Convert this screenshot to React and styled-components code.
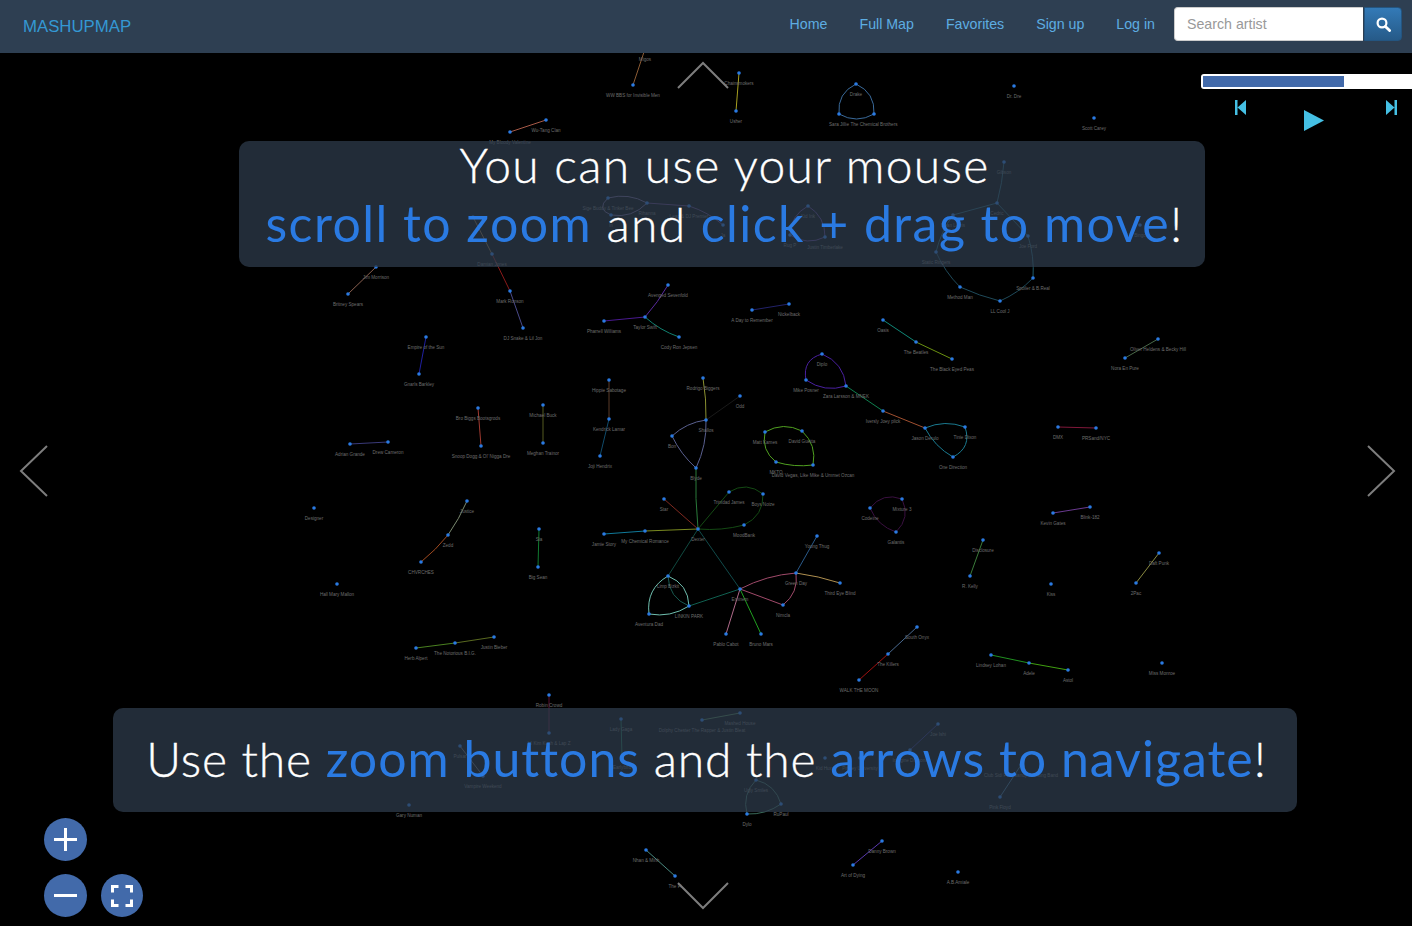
import React from 'react'
import styled, { createGlobalStyle } from 'styled-components'

const Global = createGlobalStyle`
  html, body {
    margin: 0;
    height: 100%;
    background: #000;
    overflow: hidden;
  }
  * { box-sizing: border-box; }
`

const Page = styled.div`
  width: 1412px;
  height: 926px;
  display: flex;
  flex-direction: column;
  font-family: "Liberation Sans", Arial, sans-serif;
`

const Navbar = styled.nav`
  height: 53px;
  flex: none;
  display: flex;
  align-items: center;
  padding: 0 10px 0 23px;
  background: #2e3f52;
`

const Brand = styled.a`
  font-size: 16.8px;
  color: #3498d4;
  margin-right: auto;
  position: relative;
  top: 0;
`

const NavLinks = styled.div`
  display: flex;
  gap: 32px;
  margin-right: 19px;
  position: relative;
  top: -3px;
`

const NavLink = styled.a`
  font-size: 14.2px;
  line-height: 20px;
  color: #5dade2;
`

const SearchForm = styled.form`
  display: flex;
  height: 34px;
  margin: 0;
  position: relative;
  top: -2.5px;
`

const SearchInput = styled.input`
  width: 189px;
  height: 34px;
  padding: 6px 12px;
  border: 1px solid #ccc;
  border-right: 0;
  border-radius: 4px 0 0 4px;
  background: #fff;
  font: 14.2px "Liberation Sans", Arial, sans-serif;
  &::placeholder { color: #999; opacity: 1; }
`

const SearchButton = styled.button`
  width: 38px;
  height: 34px;
  margin-left: 1px;
  padding: 0;
  display: flex;
  align-items: center;
  justify-content: center;
  border: 1px solid #245580;
  border-radius: 0 4px 4px 0;
  background: linear-gradient(to bottom, #337ab7, #265a88);
`

const Main = styled.main`
  position: relative;
  flex: 1;
  overflow: hidden;
  background: #000;
`

const MapCanvas = styled.svg`
  position: absolute;
  inset: 0;
  width: 1412px;
  height: 873px;
`

const NodeLabel = styled.text`
  font-family: "Liberation Sans", Arial, sans-serif;
  font-size: 4.6px;
  fill: #6e6e6e;
  text-anchor: middle;
`

const Arrow = styled.svg`
  position: absolute;
  width: ${p => p.$w}px;
  height: ${p => p.$h}px;
  left: ${p => p.$left}px;
  top: ${p => p.$top}px;
  fill: none;
  stroke: #7d7d7d;
  stroke-width: 2;
`

const Panel = styled.div`
  position: absolute;
  display: flow-root;
  left: ${p => p.$left}px;
  top: ${p => p.$top}px;
  width: ${p => p.$width}px;
  height: ${p => p.$height}px;
  padding-left: ${p => p.$indent}px;
  border-radius: 10px;
  background: rgba(46, 60, 77, 0.73);
  color: #fff;
  font-family: Lato, sans-serif;
  font-size: 48px;
  font-weight: 300;
  -webkit-text-stroke: 0.35px #fff;
  line-height: 58px;
  letter-spacing: ${p => p.$spacing}px;
  text-align: center;
  white-space: nowrap;
`

const PanelText = styled.div`
  margin-top: ${p => p.$offset}px;
`

const Hot = styled.span`
  color: #2a7ae2;
  font-size: 50px;
  font-weight: 400;
  -webkit-text-stroke: 0;
  letter-spacing: ${p => p.$spacing}px;
`

const Player = styled.div`
  position: absolute;
  top: 21px;
  right: 0;
  width: 211px;
`

const Track = styled.div`
  height: 15px;
  padding: 2px;
  border-radius: 3px 0 0 3px;
  background: #fff;
`

const TrackFill = styled.div`
  height: 11px;
  background: #426aaa;
`

const PlayerControls = styled.div`
  display: flex;
  align-items: flex-start;
  padding: 11px 15px 0 34px;
`

const PlayerIcon = styled.svg`
  flex: none;
  fill: #45c0e4;
  width: ${p => p.$w}px;
  height: ${p => p.$h}px;
  margin: ${p => p.$m || 0};
`

const ZoomControls = styled.div`
  position: absolute;
  left: 44px;
  bottom: 9px;
  display: grid;
  grid-template-columns: 43px 42px;
  grid-template-rows: 43px 43px;
  column-gap: 14px;
  row-gap: 13px;
`

const ZoomButton = styled.button`
  width: 100%;
  height: 43px;
  padding: 0;
  border: 0;
  border-radius: 50%;
  background: #426aaa;
  display: flex;
  align-items: center;
  justify-content: center;
  grid-column: ${p => p.$col || 'auto'};
  grid-row: ${p => p.$row || 'auto'};
`

// x, y, label - page coordinates taken from the picture
const nodes = {
  migos: [645, 49, 'Migos'], wbb: [633, 85, 'WW BBS for Invisible Men'],
  chain: [739, 73, 'Chainsmokers'], usher: [736, 111, 'Usher'],
  drake: [856, 84, 'Drake'], jillie: [839, 114, 'Sara Jillie'], chem: [874, 114, 'The Chemical Brothers'],
  dre: [1014, 86, 'Dr. Dre'], scott: [1094, 118, 'Scott Carey'],
  wutang: [546, 120, 'Wu-Tang Clan'], mbv: [510, 132, 'My Bloody Valentine'],
  sige: [608, 198, 'Sige Buddy & Tinker Bee'], inn: [611, 215, 'In'], rihanna: [647, 203, 'Rihanna'],
  lead: [689, 206, 'Lead & DJ Premier'], ja: [723, 225, 'Ja'],
  damo: [473, 217, ''], damian: [492, 254, 'Damian Jones'], ronson: [510, 291, 'Mark Ronson'],
  snake: [523, 328, 'DJ Snake & Lil Jon'], britney: [348, 294, 'Britney Spears'], morrison: [376, 267, 'Jim Morrison'],
  empire: [426, 337, 'Empire of the Sun'], gnarls: [419, 374, 'Gnarls Barkley'],
  taylor: [645, 317, 'Taylor Swift'], avenged: [668, 285, 'Avenged Sevenfold'],
  pharrell: [604, 321, 'Pharrell Williams'], cody: [679, 337, 'Cody Ron Jepsen'],
  hippie: [609, 380, 'Hippie Sabotage'], kendrick: [609, 419, 'Kendrick Lamar'], joji: [600, 456, 'Joji Hendrix'],
  buck: [543, 405, 'Michael Buck'], meghan: [543, 443, 'Meghan Trainor'],
  biggs: [478, 408, 'Bro Biggs Bootsgrods'], snoop: [481, 446, "Snoop Dogg & Ol' Nigga Dre"],
  adrian: [350, 444, 'Adrian Grande'], drew: [388, 442, 'Drew Cameron'],
  aday: [752, 310, 'A Day to Remember'], nickel: [789, 304, 'Nickelback'],
  oasis: [883, 320, 'Oasis'], beatles: [916, 342, 'The Beatles'], bep: [952, 359, 'The Black Eyed Peas'],
  olly: [1158, 339, 'Oliver Heldens & Becky Hill'], nora: [1125, 358, 'Nora En Pure'],
  diplo: [822, 354, 'Diplo'], posner: [806, 380, 'Mike Posner'], zara: [846, 386, 'Zara Larsson & MNEK'],
  iversly: [883, 411, 'Iversly Joey plick'], derulo: [925, 428, 'Jason Derulo'], tinie: [965, 427, 'Tinie Dixon'],
  direction: [953, 457, 'One Direction'], dmx: [1058, 427, 'DMX'], prisand: [1096, 428, 'PRSand/NYC'],
  kames: [765, 432, 'Matt Kames'], guetta: [802, 431, 'David Guetta'], mkto: [776, 462, 'MKTO'],
  vegas: [813, 465, 'David Vegas, Like Mike & Ummet Ozcan'],
  odd: [740, 396, 'Odd'], rodrigo: [703, 378, 'Rodrigo Biggers'], shallos: [706, 420, 'Shallos'],
  bon: [672, 436, 'Bon'], blyde: [696, 468, 'Blyde'],
  designer: [314, 508, 'Designer'], justice: [467, 501, 'Justice'], zedd: [448, 535, 'Zedd'], chvrches: [421, 562, 'CHVRCHES'],
  sia: [539, 529, 'Sia'], bigsean: [538, 567, 'Big Sean'], hall: [337, 584, 'Hall Mary Mallon'],
  herb: [416, 648, 'Herb Alpert'], biggie: [455, 643, 'The Notorious B.I.G.'], bieber: [494, 637, 'Justin Bieber'],
  robin: [549, 695, 'Robin Crowd'], lilkim: [549, 733, 'Lil Kim Kush & Lap Z'],
  star: [664, 499, 'Star'], dexter: [698, 529, 'Dexter'], mcr: [645, 531, 'My Chemical Romance'], jamie: [604, 534, 'Jamie Story'],
  trinidad: [729, 492, 'Trinidad James'], boys: [763, 494, 'Boys Noize'], moodbank: [744, 525, 'MoodBank'],
  limp: [668, 576, 'Limp Bizkit'], aventura: [649, 614, 'Aventura Dad'], linkin: [689, 606, 'LINKIN PARK'],
  eminem: [740, 589, 'Eminem'], pablo: [726, 634, 'Pablo Cabot'], bruno: [761, 634, 'Bruno Mars'],
  greenday: [796, 573, 'Green Day'], thug: [817, 536, 'Young Thug'], thirdeye: [840, 583, 'Third Eye Blind'], nimcla: [783, 605, 'Nimcla'],
  codeine: [870, 508, 'Codeine'], mixture: [902, 499, 'Mixture 3'], galantis: [896, 532, 'Galantis'],
  gates: [1053, 513, 'Kevin Gates'], blink: [1090, 507, 'Blink-182'], disclosure: [983, 540, 'Disclosure'], kelly: [970, 576, 'R. Kelly'],
  kiss: [1051, 584, 'Kiss'], daft: [1159, 553, 'Daft Punk'], tupac: [1136, 583, '2Pac'],
  south: [917, 627, 'South Onyx'], killers: [888, 654, 'The Killers'], walk: [859, 680, 'WALK THE MOON'],
  lohan: [991, 655, 'Lindsey Lohan'], adele: [1029, 663, 'Adele'], astol: [1068, 670, 'Astol'], monroe: [1162, 663, 'Miss Monroe'],
  numan: [409, 805, 'Gary Numan'], pulsar: [460, 746, 'Pulsar'], vampire: [483, 776, 'Vampire Weekend'],
  gaga: [621, 719, 'Lady Gaga'], early: [622, 757, 'Earlybird'], dolphy: [702, 720, 'Dolphy Chester The Rapper & Justin Bleat'], mashed: [740, 713, 'Mashed House'],
  ishi: [938, 724, 'Joe Ishi'], dragons: [910, 750, 'Imagine Dragons'], kidh: [825, 758, 'Kid Huxx'], florida: [860, 758, 'Pinney University'],
  smiles: [756, 780, 'Ugly Smiles'], rupaul: [781, 804, 'RuPaul'], dylo: [747, 814, 'Dylo'],
  nhan: [646, 850, 'Nhan & Minh'], fi: [675, 876, 'The Fi'], danny: [882, 841, 'Danny Brown'], dying: [853, 865, 'Art of Dying'], amiable: [958, 872, 'A.B.Amiale'],
  club: [1021, 765, 'Club Sidi Feat Sandy Wanking Band'], floyd: [1000, 797, 'Pink Floyd'],
  gibson: [1004, 162, 'Gibson'], cedric: [997, 203, 'Cedric'], dean: [953, 215, 'Dean Lewis'], ford: [1028, 236, 'Joe Ford'],
  ringers: [936, 252, 'Static Ringers'], method: [960, 287, 'Method Man'], llcool: [1000, 301, 'LL Cool J'], spoiler: [1033, 278, 'Spoiler & B.Real'],
  kidink: [808, 206, 'Kid Ink'], timber: [825, 237, 'Justin Timberlake'], rug: [790, 235, 'Rug P'], bingo: [1140, 225, 'Bingo'],
}

// from, to, colour, bend in px (sideways push of the curve's middle)
const links = [
  ['migos', 'wbb', '#8a5a33'], ['chain', 'usher', '#a8a020'], ['drake', 'jillie', '#3a6a9a', 6], ['jillie', 'chem', '#3a6a9a', 5], ['chem', 'drake', '#3a6a9a', 6],
  ['wutang', 'mbv', '#a85a48'], ['sige', 'inn', '#6b5a88', 7], ['inn', 'rihanna', '#6b5a88', 5], ['sige', 'rihanna', '#6b5a88', -4], ['rihanna', 'lead', '#5b3a78'], ['lead', 'ja', '#5b3a78', -2],
  ['damo', 'damian', '#8a6a3a'], ['damian', 'ronson', '#8a1a1a'], ['ronson', 'snake', '#4a4a8a'], ['britney', 'morrison', '#8a6050'],
  ['empire', 'gnarls', '#2020a0'], ['taylor', 'avenged', '#5a2aa0', 1], ['taylor', 'pharrell', '#4a1a90'], ['taylor', 'cody', '#108070', 2],
  ['hippie', 'kendrick', '#5a3a28'], ['kendrick', 'joji', '#104a6a'], ['buck', 'meghan', '#555a20'], ['biggs', 'snoop', '#a03a30'], ['adrian', 'drew', '#3a3a7a'],
  ['aday', 'nickel', '#22226a'], ['oasis', 'beatles', '#108878'], ['beatles', 'bep', '#6a9010'], ['olly', 'nora', '#4a6a4a'],
  ['diplo', 'posner', '#4a20a0', 7], ['posner', 'zara', '#4a20a0', 5], ['zara', 'diplo', '#4a20a0', 6], ['zara', 'iversly', '#108050'], ['iversly', 'derulo', '#a05030'],
  ['derulo', 'tinie', '#1a7a90', -4], ['tinie', 'direction', '#1a7a90', -7], ['direction', 'derulo', '#1a7a90', -3], ['dmx', 'prisand', '#80183a'],
  ['kames', 'guetta', '#50a020', -5], ['guetta', 'vegas', '#50a020', -5], ['vegas', 'mkto', '#50a020', -2], ['mkto', 'kames', '#50a020', -5],
  ['odd', 'shallos', '#1a1a1a'], ['rodrigo', 'shallos', '#8a9030', -1], ['bon', 'shallos', '#5a6090', -3], ['shallos', 'blyde', '#5a6090', -3], ['bon', 'blyde', '#5a6090', 2], ['blyde', 'dexter', '#2a7a3a', 1],
  ['justice', 'zedd', '#7a8a70', -1], ['zedd', 'chvrches', '#a04a20', -1], ['sia', 'bigsean', '#107a30'], ['herb', 'biggie', '#4a8020'], ['biggie', 'bieber', '#5a6a20'],
  ['robin', 'lilkim', '#5a1030'], ['star', 'dexter', '#802a20'], ['dexter', 'trinidad', '#144a14'], ['trinidad', 'boys', '#144a14', -6], ['boys', 'moodbank', '#144a14', -6], ['moodbank', 'dexter', '#144a14', -2],
  ['dexter', 'mcr', '#7a8a20'], ['mcr', 'jamie', '#107a9a'], ['dexter', 'limp', '#104a40'], ['dexter', 'eminem', '#104a4a'], ['linkin', 'eminem', '#106050'],
  ['limp', 'linkin', '#70c0b0', -6], ['limp', 'linkin', '#185a50', 6], ['limp', 'aventura', '#70c0b0', 7], ['aventura', 'linkin', '#70c0b0', 4],
  ['eminem', 'greenday', '#a04a6a', -3], ['eminem', 'nimcla', '#a04a6a'], ['nimcla', 'greenday', '#a04a6a', 5], ['greenday', 'thug', '#2a5a8a'], ['greenday', 'thirdeye', '#b09050', -1],
  ['eminem', 'pablo', '#b06a8a'], ['eminem', 'bruno', '#20a020'],
  ['codeine', 'mixture', '#3a1040', -6], ['mixture', 'galantis', '#3a1040', -6], ['galantis', 'codeine', '#3a1040', -4],
  ['gates', 'blink', '#6a3a90'], ['disclosure', 'kelly', '#3a7a3a'], ['daft', 'tupac', '#8a8a40'], ['south', 'killers', '#4a6a90'], ['killers', 'walk', '#a01010'],
  ['lohan', 'adele', '#209020'], ['adele', 'astol', '#40a010'], ['pulsar', 'vampire', '#6a6a6a'], ['gaga', 'early', '#1a6a4a'], ['dolphy', 'mashed', '#4a7a4a'], ['ishi', 'dragons', '#2a2a7a'],
  ['smiles', 'rupaul', '#3a6a5a', -5], ['rupaul', 'dylo', '#3a6a5a', -3], ['dylo', 'smiles', '#3a6a5a', -5], ['nhan', 'fi', '#4a8a80'], ['danny', 'dying', '#5a3ab0'], ['club', 'floyd', '#3a6a8a'],
  ['gibson', 'cedric', '#1f5a6a', -1], ['dean', 'cedric', '#1f5a6a'], ['cedric', 'ford', '#1f5a6a'], ['ford', 'spoiler', '#1f5a6a', -2], ['dean', 'ringers', '#1f5a6a', 2],
  ['ringers', 'method', '#1f4a5a', 2], ['method', 'llcool', '#1f4a5a', 1], ['llcool', 'spoiler', '#1f4a5a', 2],
  ['kidink', 'rug', '#5a3a88', 5], ['rug', 'timber', '#5a3a88', 5], ['timber', 'kidink', '#5a3a88', 5],
]

const linkPath = ([from, to, , bend = 0]) => {
  const [x1, y1] = nodes[from]
  const [x2, y2] = nodes[to]
  if (!bend) return `M${x1} ${y1}L${x2} ${y2}`
  const len = Math.hypot(x2 - x1, y2 - y1)
  const cx = (x1 + x2) / 2 + ((y1 - y2) / len) * bend * 2
  const cy = (y1 + y2) / 2 + ((x2 - x1) / len) * bend * 2
  return `M${x1} ${y1}Q${cx} ${cy} ${x2} ${y2}`
}

const MashupGraph = () => (
  <MapCanvas viewBox="0 53 1412 873">
    {links.map((l, i) => (
      <path key={i} d={linkPath(l)} fill="none" stroke={l[2]} strokeWidth="1" />
    ))}
    {Object.entries(nodes).map(([id, [x, y, label]]) => (
      <g key={id}>
        <circle cx={x} cy={y} r="1.8" fill="#2a7ae2" />
        <NodeLabel x={x} y={y + 12}>{label}</NodeLabel>
      </g>
    ))}
  </MapCanvas>
)

const App = () => (
  <Page>
    <Global />
    <Navbar>
      <Brand>MASHUPMAP</Brand>
      <NavLinks>
        <NavLink>Home</NavLink>
        <NavLink>Full Map</NavLink>
        <NavLink>Favorites</NavLink>
        <NavLink>Sign up</NavLink>
        <NavLink>Log in</NavLink>
      </NavLinks>
      <SearchForm>
        <SearchInput placeholder="Search artist" />
        <SearchButton type="button">
          <svg width="15" height="15" viewBox="0 0 15 15" fill="none" stroke="#fff">
            <circle cx="6" cy="6" r="4.4" strokeWidth="2.2" />
            <path d="M9.4 9.4L13.6 13.6" strokeWidth="2.8" strokeLinecap="round" />
          </svg>
        </SearchButton>
      </SearchForm>
    </Navbar>

    <Main>
      <MashupGraph />

      <Arrow $w={54} $h={30} $left={676} $top={8} viewBox="0 0 54 30"><path d="M2 27L27 2L52 27" /></Arrow>
      <Arrow $w={54} $h={30} $left={676} $top={828} viewBox="0 0 54 30"><path d="M2 2L27 27L52 2" /></Arrow>
      <Arrow $w={30} $h={54} $left={19} $top={391} viewBox="0 0 30 54"><path d="M28 2L2 27L28 52" /></Arrow>
      <Arrow $w={30} $h={54} $left={1366} $top={391} viewBox="0 0 30 54"><path d="M2 2L28 27L2 52" /></Arrow>

      <Panel $left={239} $top={88} $width={966} $height={126} $spacing={1.3} $indent={5}>
        <PanelText $offset={-5}>
          You can use your mouse
          <br />
          <Hot $spacing={1.45}>scroll to zoom</Hot> and <Hot $spacing={1.45}>click + drag to move</Hot>!
        </PanelText>
      </Panel>
      <Panel $left={113} $top={655} $width={1184} $height={104} $spacing={0.8} $indent={3}>
        <PanelText $offset={21}>
          Use the <Hot $spacing={1}>zoom buttons</Hot> and the <Hot $spacing={1}>arrows to navigate</Hot>!
        </PanelText>
      </Panel>

      <Player>
        <Track><TrackFill style={{ width: 141 }} /></Track>
        <PlayerControls>
          <PlayerIcon $w={11} $h={15} viewBox="0 0 11 15">
            <path d="M0 0H2.5V15H0ZM2.5 7.5L11 0V15Z" />
          </PlayerIcon>
          <PlayerIcon $w={20} $h={21} $m="10px 0 0 57.5px" viewBox="0 0 20 21">
            <path d="M0 0L20 10.5L0 21Z" />
          </PlayerIcon>
          <PlayerIcon $w={11} $h={15} $m="0 0 0 62px" viewBox="0 0 11 15">
            <path d="M0 0L8.5 7.5L0 15ZM8.5 0H11V15H8.5Z" />
          </PlayerIcon>
        </PlayerControls>
      </Player>

      <ZoomControls>
        <ZoomButton $col={1} $row={1}>
          <svg width="23" height="23" viewBox="0 0 23 23" stroke="#fff" strokeWidth="3"><path d="M0 11.5H23M11.5 0V23" /></svg>
        </ZoomButton>
        <ZoomButton $col={1} $row={2}>
          <svg width="23" height="23" viewBox="0 0 23 23" stroke="#fff" strokeWidth="3"><path d="M0 11.5H23" /></svg>
        </ZoomButton>
        <ZoomButton $col={2} $row={2}>
          <svg width="22" height="22" viewBox="0 0 22 22" fill="none" stroke="#fff" strokeWidth="3">
            <path d="M1.5 7.5V1.5H7.5M14.5 1.5H20.5V7.5M20.5 14.5V20.5H14.5M7.5 20.5H1.5V14.5" />
          </svg>
        </ZoomButton>
      </ZoomControls>
    </Main>
  </Page>
)

export default App
